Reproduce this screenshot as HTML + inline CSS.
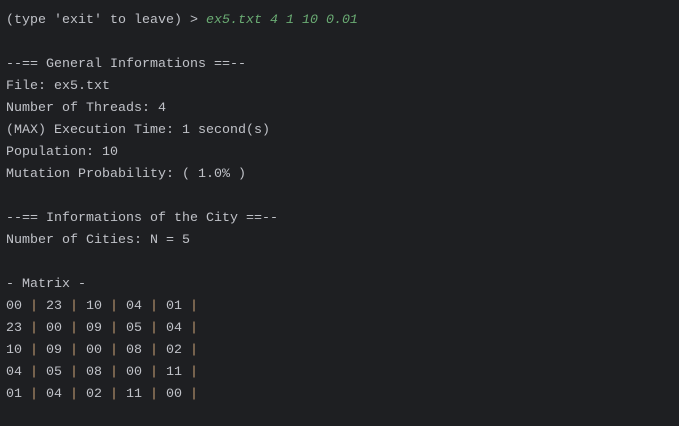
<!DOCTYPE html>
<html><head><style>
html,body{margin:0;padding:0;background:#1e1f22;width:679px;height:426px;overflow:hidden}
pre{margin:0;position:absolute;left:6px;top:10px;font-family:"Liberation Mono","DejaVu Sans Mono",monospace;font-size:13.33px;line-height:22px;color:#c0c2c8}
.g{color:#6aab73;font-style:italic}
.p{color:#bf9a72}
</style></head><body>
<pre>(type 'exit' to leave) &gt; <span class="g">ex5.txt 4 1 10 0.01</span>

--== General Informations ==--
File: ex5.txt
Number of Threads: 4
(MAX) Execution Time: 1 second(s)
Population: 10
Mutation Probability: ( 1.0% )

--== Informations of the City ==--
Number of Cities: N = 5

- Matrix -
00 <span class="p">|</span> 23 <span class="p">|</span> 10 <span class="p">|</span> 04 <span class="p">|</span> 01 <span class="p">|</span>
23 <span class="p">|</span> 00 <span class="p">|</span> 09 <span class="p">|</span> 05 <span class="p">|</span> 04 <span class="p">|</span>
10 <span class="p">|</span> 09 <span class="p">|</span> 00 <span class="p">|</span> 08 <span class="p">|</span> 02 <span class="p">|</span>
04 <span class="p">|</span> 05 <span class="p">|</span> 08 <span class="p">|</span> 00 <span class="p">|</span> 11 <span class="p">|</span>
01 <span class="p">|</span> 04 <span class="p">|</span> 02 <span class="p">|</span> 11 <span class="p">|</span> 00 <span class="p">|</span></pre>
</body></html>
